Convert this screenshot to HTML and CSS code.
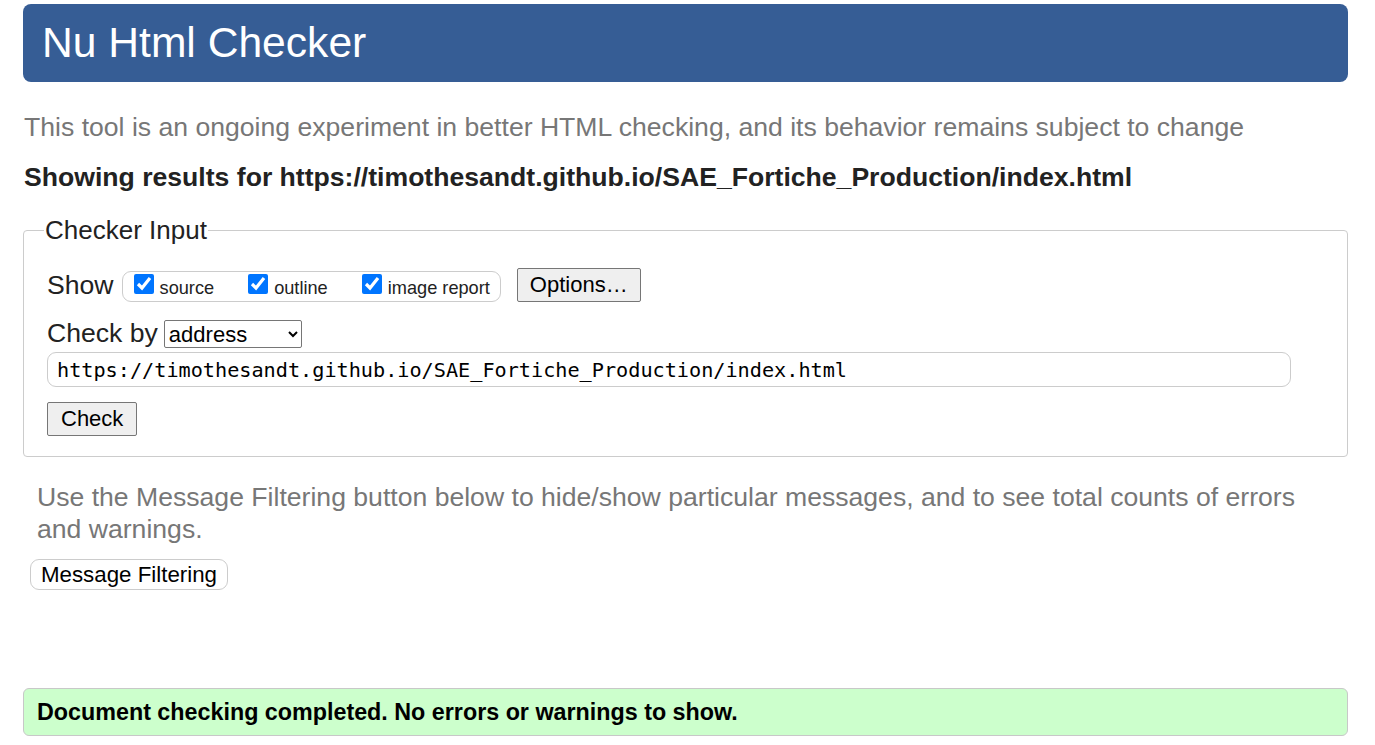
FILE: index.html
```html
<!DOCTYPE html>
<html lang="en">
<head>
<meta charset="utf-8">
<title>Nu Html Checker</title>
<link rel="stylesheet" href="styles.css">
</head>
<body>
<header class="banner"><h1 class="title">Nu Html Checker</h1></header>
<p class="intro">This tool is an ongoing experiment in better HTML checking, and its behavior remains subject to change</p>
<p class="results">Showing results for https://timothesandt.github.io/SAE_Fortiche_Production/index.html</p>
<fieldset class="checker">
  <legend class="legend">Checker Input</legend>
  <div class="row show-row">
    <span class="label">Show</span>
    <span class="group">
      <label class="opt"><input type="checkbox" checked><span>source</span></label>
      <label class="opt"><input type="checkbox" checked><span>outline</span></label>
      <label class="opt"><input type="checkbox" checked><span>image report</span></label>
    </span>
    <button class="btn options">Options…</button>
  </div>
  <div class="row by-row">
    <span class="label">Check by</span>
    <select class="select"><option>address</option></select>
  </div>
  <div class="url">https://timothesandt.github.io/SAE_Fortiche_Production/index.html</div>
  <div class="row"><button class="btn check">Check</button></div>
</fieldset>
<p class="filter-note">Use the Message Filtering button below to hide/show particular messages, and to see total counts of errors and warnings.</p>
<button class="filter-btn">Message Filtering</button>
<div class="success">Document checking completed. No errors or warnings to show.</div>
</body>
</html>
```
FILE: styles.css
```css
html, body { margin: 0; padding: 0; background: #fff; }
body {
  font-family: "Liberation Sans", Arial, sans-serif;
  padding: 4px 27px 0 23px;
  color: #222;
}
.banner {
  background: #365d95;
  border-radius: 8px;
  height: 78px;
  display: flex;
  align-items: center;
  padding-left: 19px;
}
.title {
  margin: 0;
  color: #fff;
  font-weight: normal;
  font-size: 42.6px;
  line-height: 1;
  position: relative;
  top: -1px;
}
.intro {
  margin: 30px 0 0 1px;
  color: #777;
  font-size: 26.6px;
  line-height: 30px;
}
.results {
  margin: 20px 0 0 1px;
  font-weight: bold;
  font-size: 26.6px;
  line-height: 30px;
  color: #222;
}
.checker {
  margin: 23px 0 0 0;
  border: 1px solid #ccc;
  border-radius: 4px;
  padding: 22px 56px 20px 23px;
}
.legend {
  font-size: 26px;
  line-height: 30px;
  padding: 0 1px;
  margin-left: -3px;
  color: #222;
}
.row { display: flex; align-items: center; }
.label { font-size: 26.6px; line-height: 30px; color: #222; }
.show-row { height: 34px; margin-top: 1px; }
.group {
  display: inline-flex;
  align-items: center;
  margin-left: 8px;
  border: 1px solid #ccc;
  border-radius: 9px;
  height: 31px;
  box-sizing: border-box;
  padding: 0 10px 0 11px;
  position: relative;
  top: 1px;
}
.opt { display: inline-flex; align-items: center; font-size: 18.2px; margin-right: 34px; color: #222; }
.opt:last-child { margin-right: 0; }
.opt input { width: 20px; height: 20px; margin: 0 6px 4px 0; accent-color: #0075ff; }
.opt span { position: relative; top: 2px; }
.btn {
  font-family: "Liberation Sans", Arial, sans-serif;
  font-size: 22px;
  background: #efefef;
  border: 1px solid #767676;
  border-radius: 2px;
  color: #000;
  height: 34px;
  padding: 0 13px;
}
.options { margin-left: 16px; padding: 0 12px; }
.by-row { margin-top: 16px; }
.select {
  margin-left: 6px;
  font-family: "Liberation Sans", Arial, sans-serif;
  font-size: 22px;
  height: 28px;
  width: 138px;
  border: 1px solid #767676;
  border-radius: 2px;
  background: #fff;
  color: #000;
  position: relative;
  top: 1px;
}
.url {
  margin-top: 4px;
  border: 1px solid #ccc;
  border-radius: 9px;
  height: 35px;
  box-sizing: border-box;
  display: flex;
  align-items: center;
  padding-left: 9px;
  font-family: "DejaVu Sans Mono", monospace;
  font-size: 20.2px;
  color: #000;
}
.check { margin-top: 15px; }
.filter-note {
  margin: 24px 30px 0 14px;
  color: #777;
  font-size: 26.6px;
  line-height: 32px;
}
.filter-btn {
  display: block;
  margin: 14px 0 0 7px;
  font-family: "Liberation Sans", Arial, sans-serif;
  font-size: 22.3px;
  background: #fff;
  border: 1px solid #ccc;
  border-radius: 9px;
  height: 31px;
  padding: 0 10px;
  color: #000;
}
.success {
  margin-top: 98px;
  background: #ccffcc;
  border: 1px solid #c8c8c8;
  border-radius: 6px;
  height: 48px;
  box-sizing: border-box;
  display: flex;
  align-items: center;
  padding-left: 13px;
  font-weight: bold;
  font-size: 23.3px;
  color: #000;
}
```
